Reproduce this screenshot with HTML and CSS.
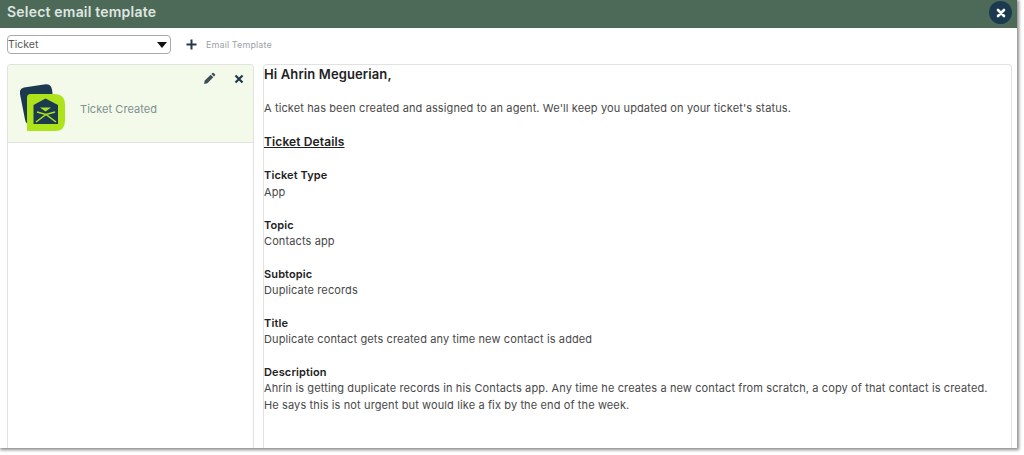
FILE: index.html
```html
<!DOCTYPE html>
<html lang="en">
<head>
<meta charset="utf-8">
<title>Select email template</title>
<link rel="stylesheet" href="styles.css">
</head>
<body>
<div class="dialog">
  <header class="titlebar">
    <h1 class="title">Select email template</h1>
    <button class="close" aria-label="Close">
      <svg width="10" height="10" viewBox="0 0 10 10"><path d="M2 2l6 6M8 2l-6 6" stroke="#fff" stroke-width="2.600" stroke-linecap="round"/></svg>
    </button>
  </header>
  <div class="toolbar">
    <div class="select"><span>Ticket</span><i class="caret"></i></div>
    <div class="add">
      <svg width="11" height="11" viewBox="0 0 11 11"><path d="M5.500 0.500v10M0.500 5.500h10" stroke="#1f3a4d" stroke-width="2"/></svg>
      <span>Email Template</span>
    </div>
  </div>
  <div class="content">
    <aside class="list">
      <div class="item">
        <div class="actions">
          <svg width="13" height="13" viewBox="0 0 13 13"><path d="M1 12l.8-3.400 5.900-5.900 2.600 2.600-5.900 5.900z" fill="#3c4f57"/><path d="M8.400 1.900l1-1a.9.9 0 0 1 1.200 0l1.400 1.400a.9.9 0 0 1 0 1.200l-1 1z" fill="#3c4f57"/></svg>
          <svg width="10" height="10" viewBox="0 0 10 10"><path d="M1.500 1.500l7 7M8.500 1.500l-7 7" stroke="#1f3a4d" stroke-width="2.200"/></svg>
        </div>
        <svg class="logo" width="46" height="48" viewBox="0 0 46 48">
          <path d="M4 3.500L24 0.500q7-1 8 5l3 24q1 7-5 8l-18 3q-6 1-7-5L0 10q-1-5.500 4-6.500z" fill="#1b3a4f"/>
          <path d="M7 13.500q0-3.500 3.500-3.500H34q11 0 11 11v16q0 10-10 10H7z" fill="#aee31b"/>
          <path d="M13.500 21L25.500 14.500 38 21V40H13.500z" fill="#1b3a4f"/>
          <path d="M20 23.500h11l-5.500 4z" fill="#aee31b"/>
          <path d="M16 38l10-7.500 10 7.500M17 28l9 2.500 9-2.500" stroke="#aee31b" stroke-width="1.500" fill="none"/>
        </svg>
        <span class="item-name">Ticket Created</span>
      </div>
    </aside>
    <main class="preview">
      <p class="greeting">Hi Ahrin Meguerian,</p>
      <p class="intro">A ticket has been created and assigned to an agent. We'll keep you updated on your ticket's status.</p>
      <h2 class="details">Ticket Details</h2>
      <dl class="fields">
        <dt>Ticket Type</dt><dd class="first">App</dd>
        <dt>Topic</dt><dd>Contacts app</dd>
        <dt>Subtopic</dt><dd>Duplicate records</dd>
        <dt>Title</dt><dd>Duplicate contact gets created any time new contact is added</dd>
        <dt>Description</dt><dd class="last">Ahrin is getting duplicate records in his Contacts app. Any time he creates a new contact from scratch, a copy of that contact is created. He says this is not urgent but would like a fix by the end of the week.</dd>
      </dl>
    </main>
  </div>
</div>
</body>
</html>
```
FILE: styles.css
```css
* { box-sizing: border-box; }
html, body { margin: 0; height: 100%; background: #fff; overflow: hidden; }
body { font-family: Inter, "Liberation Sans", sans-serif; color: #333; }
.dialog {
  position: relative;
  width: 1017px;
  height: 448px;
  background: #fff;
  box-shadow: 1px 1px 3px 1px rgba(0,0,0,.45);
  display: flex;
  flex-direction: column;
}
.titlebar {
  height: 28px;
  flex: none;
  background: #4d6a58;
  padding-left: 7px;
  display: flex;
  align-items: center;
}
.title { margin: 0 0 5px; font-size: 14px; font-weight: 600; color: #dfe6e1; letter-spacing: .2px; }
.close {
  position: absolute;
  top: 1px;
  right: 5px;
  width: 23px;
  height: 23px;
  border: 0;
  padding: 0;
  border-radius: 50%;
  background: #1b3a4f;
  display: flex;
  align-items: center;
  justify-content: center;
}
.toolbar {
  height: 36px;
  flex: none;
  padding: 7px 0 0 7px;
  display: flex;
  align-items: flex-start;
}
.select {
  width: 164px;
  height: 19px;
  border: 1px solid #a9a9a9;
  border-radius: 4px;
  padding-left: 0;
  font-size: 10.500px;
  line-height: 17px;
  color: #555;
  display: flex;
  justify-content: space-between;
  align-items: center;
}
.caret {
  width: 0;
  height: 0;
  margin-right: 3px;
  border-left: 5px solid transparent;
  border-right: 5px solid transparent;
  border-top: 6px solid #111;
}
.add {
  margin-left: 15px;
  height: 19px;
  display: flex;
  align-items: center;
  gap: 9px;
  font-size: 9px;
  color: #9aa3a8;
  letter-spacing: .1px;
}
.content {
  flex: 1;
  min-height: 0;
  padding-left: 7px;
  display: flex;
  gap: 9px;
}
.list {
  width: 247px;
  flex: none;
  border: 1px solid #e2e2e2;
  border-bottom: 0;
  border-radius: 4px 4px 0 0;
}
.item {
  position: relative;
  height: 78px;
  padding: 19px 0 0 12px;
  background: #f3faea;
  border-bottom: 1px solid #e2e2e2;
  border-radius: 3px 3px 0 0;
  display: flex;
  align-items: flex-start;
  gap: 14px;
}
.actions {
  position: absolute;
  top: 7px;
  right: 9px;
  display: flex;
  align-items: center;
  gap: 18px;
}
.item-name { margin-top: 18px; font-size: 11px; letter-spacing: .05px; color: #7d8f8f; }
.logo { flex: none; }
.preview {
  width: 749px;
  flex: none;
  border: 1px solid #e2e2e2;
  border-bottom: 0;
  border-radius: 4px 4px 0 0;
  overflow: hidden;
  font-size: 11px;
  line-height: 16px;
  letter-spacing: .12px;
  color: #484848;
}
.greeting { margin: 0; font-size: 13px; line-height: 18px; font-weight: 600; color: #222; }
.intro { margin: 17px 0 0; }
.details { margin: 17px 0 0; font-size: 12px; line-height: 18px; font-weight: 600; color: #222; text-decoration: underline; }
.fields { margin: 16px 0 0; }
.fields dt { margin-top: 17px; font-weight: 600; color: #222; }
.fields dt:first-child { margin-top: 0; }
.fields dd { margin: 0; width: 730px; }
.fields .first { margin-top: 1px; }
.fields .last { line-height: 17px; }
```
